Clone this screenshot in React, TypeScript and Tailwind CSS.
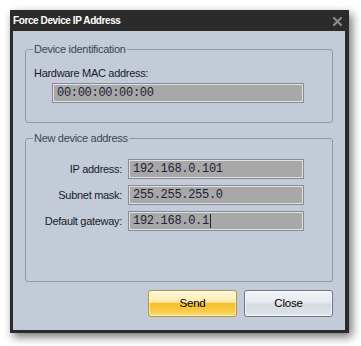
import React from "react";

const sans = { fontFamily: '"Liberation Sans", Arial, sans-serif' };
const mono = { fontFamily: '"Liberation Mono", "Courier New", monospace' };

function Field({ value, width, cursor }: { value: string; width: string; cursor?: boolean }) {
  return (
    <div
      className={`${width} h-[20px] bg-[#a8a8a8] border border-[#858b93] shadow-[inset_0_0_0_1px_#dfe1e4] flex items-center pl-[4px] text-[12px] tracking-[-0.3px] text-[#1c2238]`}
      style={mono}
    >
      <span>{value}</span>
      {cursor && <span className="inline-block w-[1px] h-[14px] bg-[#1c2238] ml-[1px]" />}
    </div>
  );
}

function Row({ label, value, cursor }: { label: string; value: string; cursor?: boolean }) {
  return (
    <div className="flex items-center h-[20px]">
      <div className="w-[96px] text-right text-[11px] tracking-[-0.3px] text-[#161b26] leading-[14px]">{label}</div>
      <div className="ml-[6px]">
        <Field value={value} width="w-[176px]" cursor={cursor} />
      </div>
    </div>
  );
}

export default function App() {
  return (
    <div className="w-[361px] h-[346px] bg-white pl-[10px] pt-[10px]" style={sans}>
      <div className="w-[339px] h-[323px] bg-[#2b2b2b] flex flex-col shadow-[3px_4px_9px_rgba(0,0,0,0.55)]">
        <div className="h-[21px] flex items-center justify-between pl-[3px] pr-[7px]">
          <span className="text-white font-bold text-[10px] tracking-[-0.4px] leading-[12px]">Force Device IP Address</span>
          <svg width="9" height="9" viewBox="0 0 9 9" className="mt-[1px]">
            <path d="M1 1 L8 8 M8 1 L1 8" stroke="#8e8e8e" strokeWidth="2" strokeLinecap="square" />
          </svg>
        </div>
        <div className="ml-[3px] mr-[4px] h-[299px] bg-[#c3cbd8] px-[12px] pt-[12px] flex flex-col">
          <fieldset className="h-[80px] border border-[#8e99a8] rounded-[3px] p-0 m-0">
            <legend className="ml-[7px] px-[1px] leading-[12px] text-[11px] tracking-[-0.3px] text-[#3b4553]">
              Device identification
            </legend>
            <div className="pl-[8px] pt-[11px] leading-[14px] text-[11px] tracking-[-0.3px] text-[#161b26]">
              Hardware MAC address:
            </div>
            <div className="ml-[26px] mt-[3px]">
              <Field value="00:00:00:00:00" width="w-[252px]" />
            </div>
          </fieldset>
          <fieldset className="h-[150px] mt-[9px] border border-[#8e99a8] rounded-[3px] p-0 m-0">
            <legend className="ml-[7px] px-[1px] leading-[12px] text-[11px] tracking-[-0.3px] text-[#3b4553]">
              New device address
            </legend>
            <div className="pt-[15px] flex flex-col gap-[6px]">
              <Row label="IP address:" value="192.168.0.101" />
              <Row label="Subnet mask:" value="255.255.255.0" />
              <Row label="Default gateway:" value="192.168.0.1" cursor />
            </div>
          </fieldset>
          <div className="mt-[8px] flex justify-end gap-[7px]">
            <button className="w-[89px] h-[27px] rounded-[3px] border border-[#b8953a] bg-[linear-gradient(to_bottom,#fffbe4_0%,#fdeaa6_45%,#f5c02c_50%,#f8cc48_80%,#fbdb7a_100%)] shadow-[inset_0_0_0_1px_rgba(255,255,255,0.5)] text-[11.5px] text-black tracking-[-0.2px]">
              Send
            </button>
            <button className="w-[89px] h-[27px] rounded-[3px] border border-[#6f7886] bg-[linear-gradient(to_bottom,#f3f5f8_0%,#e6e9ee_45%,#d6dbe2_52%,#dce0e6_85%,#e4e7ec_100%)] shadow-[inset_0_0_0_1px_rgba(255,255,255,0.6)] text-[11.5px] text-black tracking-[-0.2px]">
              Close
            </button>
          </div>
        </div>
      </div>
    </div>
  );
}
